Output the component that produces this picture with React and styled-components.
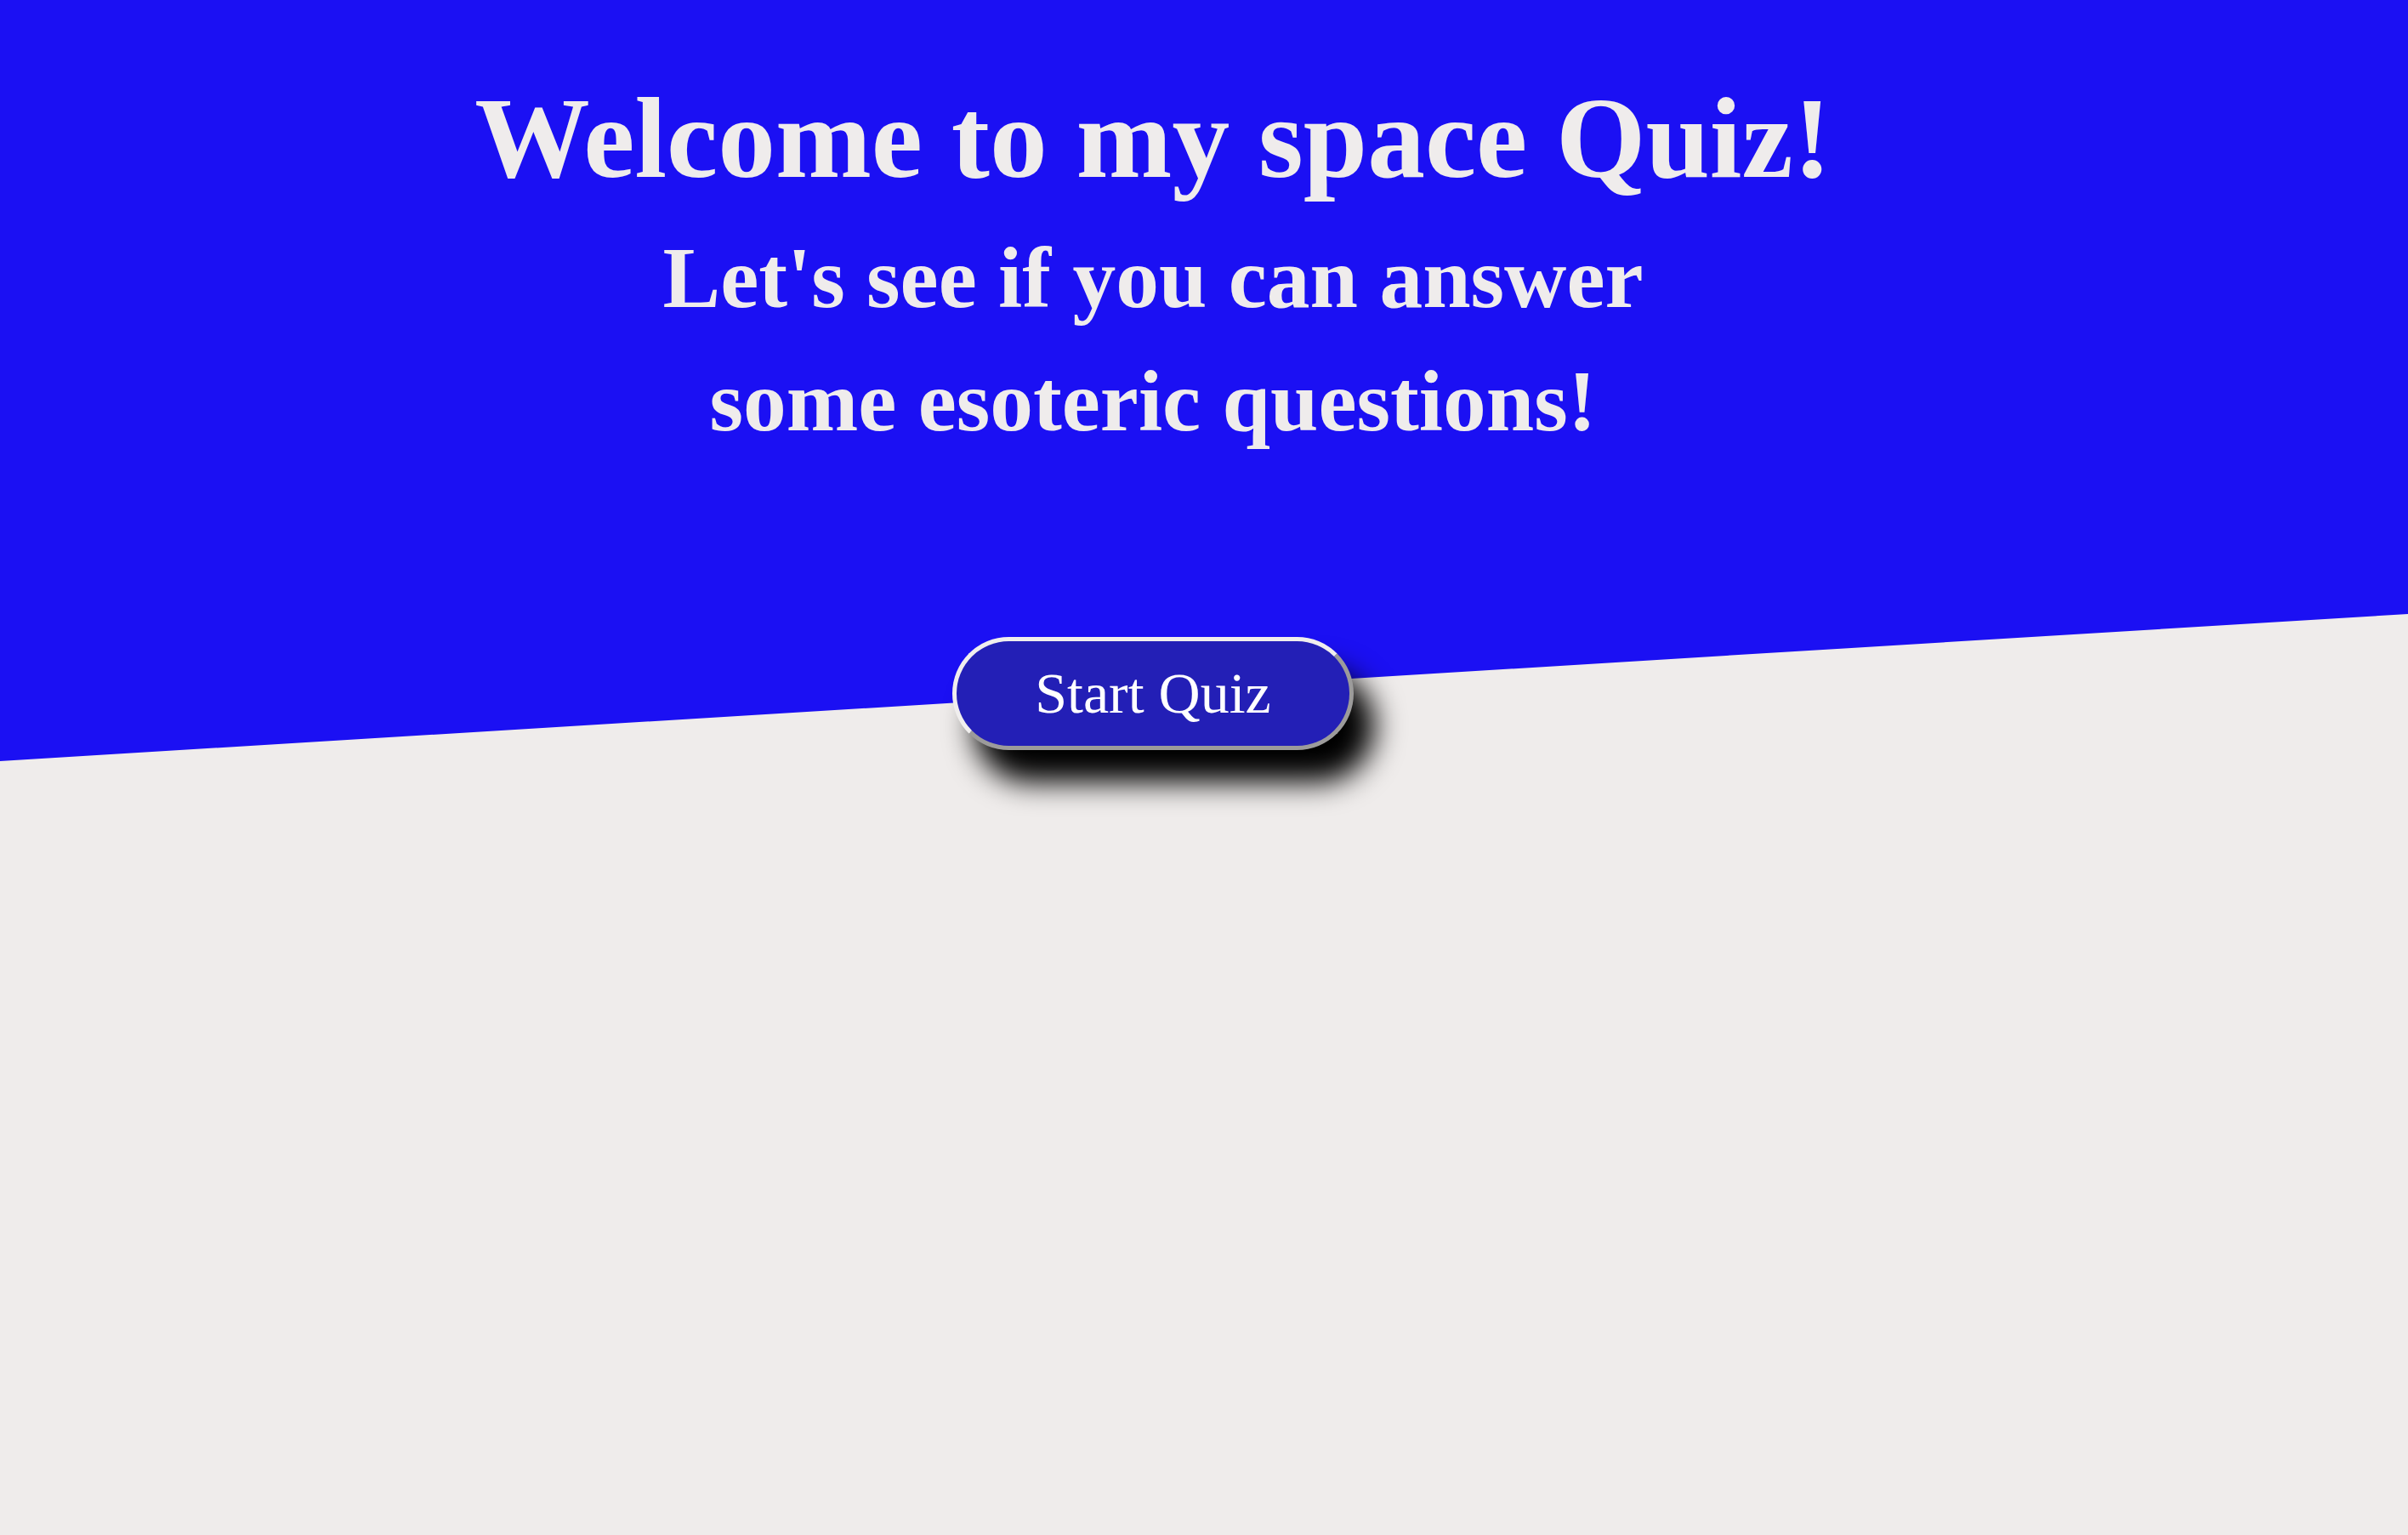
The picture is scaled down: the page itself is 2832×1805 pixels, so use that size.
import React from "react";
import styled, { createGlobalStyle } from "styled-components";

const GlobalStyle = createGlobalStyle`
  html, body {
    margin: 0;
    padding: 0;
    background: #efeceb;
    font-family: "Liberation Serif", "Times New Roman", serif;
  }
  #root {
    min-height: 100vh;
  }
`;

const Page = styled.div`
  min-height: 100vh;
  background: #efeceb;
`;

const Hero = styled.header`
  position: relative;
  height: 895px;
  &::before {
    content: "";
    position: absolute;
    inset: 0;
    background: #1b10f3;
    clip-path: polygon(0 0, 100% 0, 100% 722px, 0 100%);
    z-index: 0;
  }
`;

const Content = styled.div`
  position: relative;
  z-index: 1;
  display: flex;
  flex-direction: column;
  align-items: center;
  padding: 85px 120px 0 0;
`;

const Title = styled.h1`
  margin: 0;
  font-size: 135.5px;
  line-height: 1.15;
  font-weight: 700;
  color: #efecec;
  text-align: center;
`;

const Subtitle = styled.h2`
  margin: 14px 0 0;
  max-width: 1250px;
  font-size: 101.5px;
  line-height: 145px;
  font-weight: 700;
  color: #efecec;
  text-align: center;
`;

const StartButton = styled.button`
  margin-top: 204px;
  height: 133px;
  padding: 0 92px;
  box-sizing: border-box;
  border: 5px outset #f0eeee;
  border-radius: 67px;
  background: #231fb6;
  color: #ffffff;
  font-family: "Liberation Serif", "Times New Roman", serif;
  font-size: 68px;
  line-height: 1;
  box-shadow: 25px 38px 34px #000;
  cursor: pointer;
`;

export default function App() {
  return (
    <>
      <GlobalStyle />
      <Page>
        <Hero>
          <Content>
            <Title>Welcome to my space Quiz!</Title>
            <Subtitle>Let's see if you can answer some esoteric questions!</Subtitle>
            <StartButton>Start Quiz</StartButton>
          </Content>
        </Hero>
      </Page>
    </>
  );
}
